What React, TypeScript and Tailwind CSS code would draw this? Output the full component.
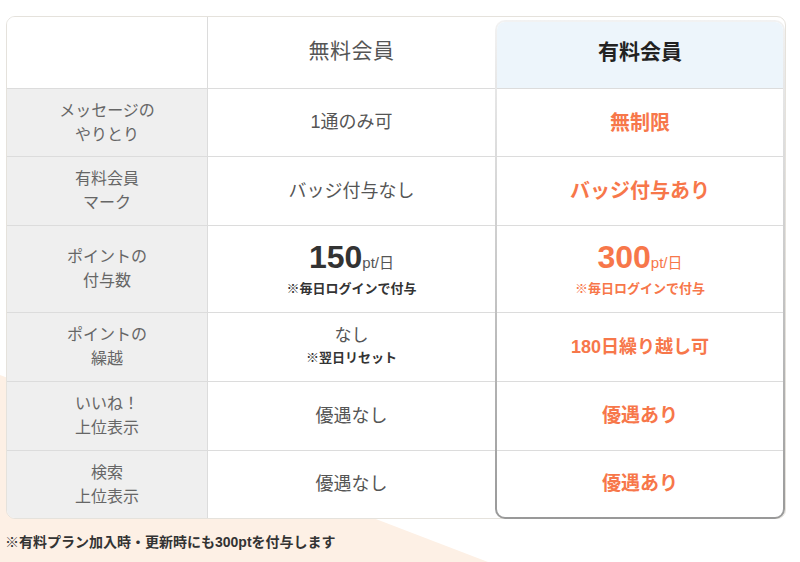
import React from 'react';

type Row = {
  label: string[];
  height: number;
  free: React.ReactNode;
  paid: React.ReactNode;
};

const orange = 'text-[#f7774a]';

const rows: Row[] = [
  {
    label: ['メッセージの', 'やりとり'],
    height: 68,
    free: <span className="text-[18px]">1通のみ可</span>,
    paid: <span className={`text-[20px] font-bold ${orange}`}>無制限</span>,
  },
  {
    label: ['有料会員', 'マーク'],
    height: 69,
    free: <span className="text-[18px]">バッジ付与なし</span>,
    paid: <span className={`text-[20px] font-bold ${orange}`}>バッジ付与あり</span>,
  },
  {
    label: ['ポイントの', '付与数'],
    height: 87,
    free: (
      <div className="flex flex-col items-center">
        <div className="flex items-baseline text-[#333]">
          <span className="text-[32px] font-bold leading-[36px]">150</span>
          <span className="text-[15px] text-[#555]">pt/日</span>
        </div>
        <span className="text-[13px] font-bold text-[#333] mt-[4px]">※毎日ログインで付与</span>
      </div>
    ),
    paid: (
      <div className={`flex flex-col items-center ${orange}`}>
        <div className="flex items-baseline">
          <span className="text-[32px] font-bold leading-[36px]">300</span>
          <span className="text-[15px]">pt/日</span>
        </div>
        <span className="text-[13px] font-bold mt-[4px]">※毎日ログインで付与</span>
      </div>
    ),
  },
  {
    label: ['ポイントの', '繰越'],
    height: 69,
    free: (
      <div className="flex flex-col items-center leading-[22px]">
        <span className="text-[17px]">なし</span>
        <span className="text-[13px] font-bold text-[#333]">※翌日リセット</span>
      </div>
    ),
    paid: <span className={`text-[18px] font-bold ${orange}`}>180日繰り越し可</span>,
  },
  {
    label: ['いいね！', '上位表示'],
    height: 69,
    free: <span className="text-[18px]">優遇なし</span>,
    paid: <span className={`text-[19px] font-bold ${orange}`}>優遇あり</span>,
  },
  {
    label: ['検索', '上位表示'],
    height: 67,
    free: <span className="text-[18px]">優遇なし</span>,
    paid: <span className={`text-[19px] font-bold ${orange}`}>優遇あり</span>,
  },
];

const App: React.FC = () => {
  return (
    <div
      className="relative w-[800px] h-[562px] overflow-hidden bg-white"
      style={{ fontFamily: '"Liberation Sans", "Noto Sans CJK JP", sans-serif' }}
    >
      {/* peach backdrop shape */}
      <svg className="absolute left-0 top-0" width="800" height="562" viewBox="0 0 800 562">
        <polygon points="0,375 488,562 0,562" fill="#fdf0e5" />
      </svg>

      <div className="relative pt-[16px] pl-[6px]">
        <div className="flex w-[780px] rounded-[9px] border border-[#e5e2dc] bg-white">
          {/* label column */}
          <div className="flex flex-col w-[201px] border-r border-[#dcdcdc] bg-[#efefef] rounded-l-[8px]">
            <div className="h-[72px] border-b border-[#dcdcdc] bg-white rounded-tl-[8px]" />
            {rows.map((r, i) => (
              <div
                key={i}
                className={`flex flex-col items-center justify-center text-[16px] leading-[24px] text-[#666] ${
                  i < rows.length - 1 ? 'border-b border-[#dcdcdc]' : ''
                }`}
                style={{ height: r.height }}
              >
                {r.label.map((l) => (
                  <span key={l}>{l}</span>
                ))}
              </div>
            ))}
          </div>

          {/* free column */}
          <div className="flex flex-col w-[287px] text-[#555]">
            <div className="h-[72px] flex items-center justify-center pb-[4px] border-b border-[#dcdcdc] text-[21px] tracking-[0.5px] text-[#555]">
              無料会員
            </div>
            {rows.map((r, i) => (
              <div
                key={i}
                className={`flex items-center justify-center ${
                  i < rows.length - 1 ? 'border-b border-[#dcdcdc]' : ''
                }`}
                style={{ height: r.height }}
              >
                {r.free}
              </div>
            ))}
          </div>

          {/* paid column */}
          <div className="w-[290px] mt-[3px] -mb-px rounded-[10px] bg-linear-to-b from-[#f2f2f2] via-[#c9c9c9] to-[#999999] p-[2px]">
            <div className="flex flex-col h-full bg-white rounded-[8px] overflow-hidden">
              <div className="h-[67px] flex items-center justify-center pb-[7px] border-b border-[#dcdcdc] bg-[#edf5fb] text-[21px] font-bold text-[#222]">
                有料会員
              </div>
              {rows.map((r, i) => (
                <div
                  key={i}
                  className={`flex items-center justify-center ${
                    i < rows.length - 1 ? 'border-b border-[#dcdcdc]' : 'flex-1'
                  }`}
                  style={i < rows.length - 1 ? { height: r.height } : undefined}
                >
                  {r.paid}
                </div>
              ))}
            </div>
          </div>
        </div>

        <p className="mt-[13px] -ml-[1px] text-[14px] leading-[20px] font-bold text-[#333]">
          ※有料プラン加入時・更新時にも300ptを付与します
        </p>
      </div>
    </div>
  );
};

export default App;
